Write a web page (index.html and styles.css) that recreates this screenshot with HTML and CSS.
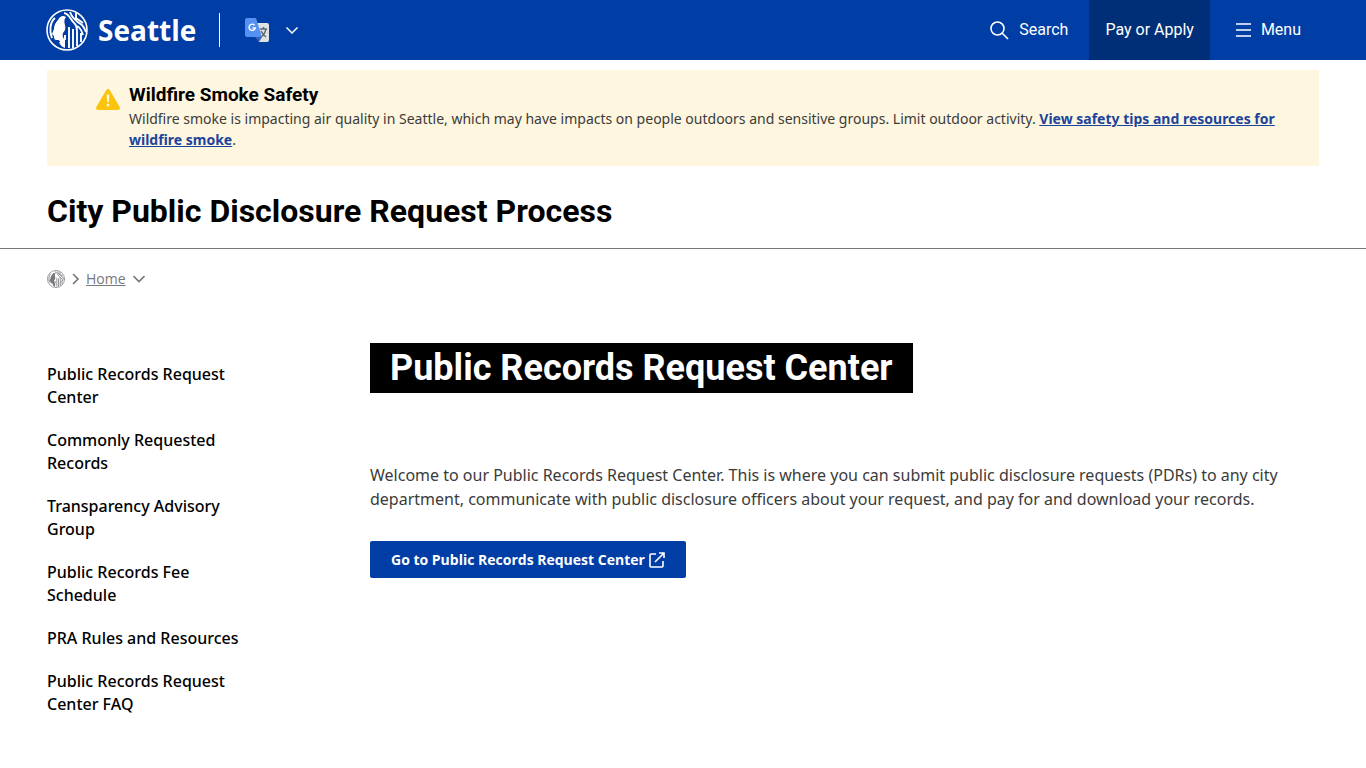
FILE: index.html
```html
<!DOCTYPE html>
<html lang="en">
<head>
<meta charset="utf-8">
<meta name="viewport" content="width=device-width, initial-scale=1">
<title>Public Records Request Center - Seattle</title>
<link rel="stylesheet" href="styles.css">
</head>
<body>
<svg class="defs" aria-hidden="true">
  <symbol id="seal" viewBox="0 0 42 42">
    <circle cx="21" cy="21" r="20" fill="none" stroke="currentColor" stroke-width="1.600"/>
    <path fill="currentColor" d="M12 11C14 7 17 6 20 8C18 10 18 13 19 16C20 19 19 22 17 24C16 27 17 29 19 31V39C16 38 14 36 13 33C15 33 14 31 11 31C8 31 8 29 8 27L6 25L8 20C8 17 9 14 12 11Z"/>
    <path fill="none" stroke="currentColor" stroke-width="1.900" d="M18 4C24 5 24 11 29 15C31 17 31 21 31 24V37M24 3C26 9 31 13 36 16C38 18 39 21 40 23M30 4V9L37 14M31 17C35 19 36 23 37 26M35 24V33M23 18V39M27 20V39M19 26V31M9 9C4 13 3 22 6 29"/>
  </symbol>
</svg>
<header class="topbar">
  <a class="brand" href="#"><svg class="brand-seal" aria-hidden="true"><use href="#seal"/></svg><span>Seattle</span></a>
  <button class="translate" type="button" aria-label="Translate">
    <svg width="24" height="24" viewBox="0 0 24 24" aria-hidden="true">
      <path fill="#dfe1e3" d="M9 5h13q2 0 2 2v15q0 2-2 2h-8Z"/>
      <path fill="#3b62ba" d="M10 19h7l-3 5Z"/>
      <path fill="#5590f2" d="M2 0h9l6 19H2q-2 0-2-2V2q0-2 2-2Z"/>
      <path d="M9.500 7.200A3.100 3.100 0 1 0 10.200 10H7.500" fill="none" stroke="#fff" stroke-width="1.400"/>
      <path d="M15 11h7M18.500 9v2M21 11q-1.500 6-5 8M16 13q2 4 5 6" fill="none" stroke="#596a73" stroke-width="1.400"/>
    </svg>
    <svg width="12" height="7" viewBox="0 0 12 7" fill="none" stroke="currentColor" stroke-width="1.500" aria-hidden="true"><path d="M.5.5 6 6 11.500.5"/></svg>
  </button>
  <nav class="actions" aria-label="Main">
    <button class="search" type="button"><svg width="19" height="19" viewBox="0 0 19 19" fill="none" stroke="currentColor" stroke-width="1.600" aria-hidden="true"><circle cx="7.500" cy="7.500" r="6.500"/><path d="m12 12 6 6"/></svg>Search</button>
    <a class="pay" href="#">Pay or Apply</a>
    <button class="menu" type="button"><svg width="15" height="14" viewBox="0 0 15 14" stroke="currentColor" stroke-width="1.600" aria-hidden="true"><path d="M0 1h15M0 7h15M0 13h15"/></svg>Menu</button>
  </nav>
</header>
<section class="alert">
  <svg width="24" height="21" viewBox="0 0 24 21" aria-hidden="true"><path fill="#fac30c" d="M10.300 1q1.700-2 3.400 0l10 17q1 3-2 3H2.300q-3 0-2-3Z"/><path fill="#fff7d8" d="M10.700 5.500h2.600l-.4 7.500h-1.800Z"/><circle cx="12" cy="16" r="1.500" fill="#fff7d8"/></svg>
  <div>
    <h2>Wildfire Smoke Safety</h2>
    <p>Wildfire smoke is impacting air quality in Seattle, which may have impacts on people outdoors and sensitive groups. Limit outdoor activity. <a href="#">View safety tips and resources for wildfire smoke</a>.</p>
  </div>
</section>
<div class="site-title">City Public Disclosure Request Process</div>
<nav class="crumbs" aria-label="Breadcrumb">
  <a href="#" aria-label="Seattle"><svg width="18" height="18" aria-hidden="true"><use href="#seal"/></svg></a>
  <svg width="7" height="12" viewBox="0 0 7 12" fill="none" stroke="currentColor" stroke-width="1.600" aria-hidden="true"><path d="m1 1 5 5-5 5"/></svg>
  <a href="#">Home</a>
  <svg width="12" height="8" viewBox="0 0 12 8" fill="none" stroke="currentColor" stroke-width="1.600" aria-hidden="true"><path d="m.5 1 5.500 5.500L11.500 1"/></svg>
</nav>
<div class="layout">
  <nav class="side" aria-label="Section">
    <a href="#">Public Records Request Center</a>
    <a href="#">Commonly Requested Records</a>
    <a href="#">Transparency Advisory Group</a>
    <a href="#">Public Records Fee Schedule</a>
    <a href="#">PRA Rules and Resources</a>
    <a href="#">Public Records Request Center FAQ</a>
  </nav>
  <main>
    <h1>Public Records Request Center</h1>
    <p>Welcome to our Public Records Request Center. This is where you can submit public disclosure requests (PDRs) to any city department, communicate with public disclosure officers about your request, and pay for and download your records.</p>
    <a class="go" href="#">Go to Public Records Request Center<svg width="16" height="16" viewBox="0 0 16 16" fill="none" stroke="currentColor" stroke-width="1.600" aria-hidden="true"><path d="M7 2H2q-1 0-1 1v11q0 1 1 1h11q1 0 1-1V9M10 1h5v5M15 1 6 10"/></svg></a>
  </main>
</div>
</body>
</html>
```
FILE: styles.css
```css
* { box-sizing: border-box; }
body {
  margin: 0;
  background: #fff;
  color: #3b3b3b;
  font: 16px/24px "Noto Sans", "Open Sans", sans-serif;
}
h1, h2, p { margin: 0; }
svg { flex: none; }
.defs { position: absolute; width: 0; height: 0; }
button { border: 0; background: none; color: inherit; font: inherit; padding: 0; cursor: pointer; }

.topbar {
  display: flex;
  align-items: center;
  height: 60px;
  padding: 0 47px 0 46px;
  background: #003da5;
  color: #fff;
  font-family: Roboto, "Open Sans", sans-serif;
}
.topbar a { color: inherit; text-decoration: none; }
.brand {
  display: flex;
  align-items: center;
  gap: 10px;
  padding-right: 23px;
  font: 700 28px/34px "Open Sans", "Noto Sans", sans-serif;
}
.brand-seal { width: 42px; height: 42px; }
.translate {
  display: flex;
  align-items: center;
  gap: 17px;
  height: 34px;
  padding-left: 25px;
  border-left: 1px solid #fff;
}
.actions { display: flex; align-self: stretch; margin-left: auto; }
.actions > * { display: flex; align-items: center; }
.search { gap: 10px; padding-right: 21px; }
.pay { padding: 0 16px; background: #002f78; }
.menu { gap: 10px; padding: 0 18px 0 26px; }

.alert {
  display: flex;
  gap: 9px;
  margin: 10px 47px 0;
  padding: 12px 20px 16px 49px;
  background: #fef6df;
}
.alert > svg { margin-top: 7px; }
.alert h2 {
  color: #000;
  font: 700 19px/26px Roboto, "Open Sans", sans-serif;
}
.alert p { font-size: 14px; line-height: 21px; }
.alert a { color: #1c449c; font-weight: 700; }

.site-title {
  padding: 21px 47px 13px;
  border-bottom: 1px solid #77787b;
  color: #000;
  font: 700 32px/48px Roboto, "Open Sans", sans-serif;
}

.crumbs {
  display: flex;
  align-items: center;
  gap: 7px;
  padding: 18px 47px 0;
  color: #77787b;
  font-family: "Open Sans", sans-serif;
  font-size: 14px;
}
.crumbs a { color: inherit; }
.crumbs svg { display: block; }

.layout {
  display: grid;
  grid-template-columns: 200px minmax(0, 1fr);
  gap: 123px;
  padding: 52px 47px 40px;
}
.side { display: flex; flex-direction: column; gap: 20px; padding-top: 20px; }
.side a { color: #000; line-height: 23px; font-weight: 500; text-decoration: none; }
main { display: flex; flex-direction: column; align-items: flex-start; }
h1 {
  padding: 0 20px;
  background: #000;
  color: #fff;
  font: 700 36px/50px Roboto, "Open Sans", sans-serif;
}
main p { margin: 70px 0 30px; }
.go {
  display: flex;
  align-items: center;
  gap: 4px;
  padding: 6px 21px;
  border-radius: 2px;
  background: #003da5;
  color: #fff;
  font: 700 14px/25px "Open Sans", "Noto Sans", sans-serif;
  text-decoration: none;
}
```
